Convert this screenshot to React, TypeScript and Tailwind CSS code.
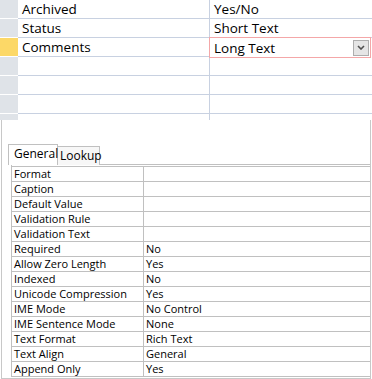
import React from "react";

const fields = [
  { name: "Archived", type: "Yes/No" },
  { name: "Status", type: "Short Text" },
  { name: "Comments", type: "Long Text", current: true },
  { name: "", type: "" },
  { name: "", type: "" },
  { name: "", type: "" },
];

const props: [string, string][] = [
  ["Format", ""],
  ["Caption", ""],
  ["Default Value", ""],
  ["Validation Rule", ""],
  ["Validation Text", ""],
  ["Required", "No"],
  ["Allow Zero Length", "Yes"],
  ["Indexed", "No"],
  ["Unicode Compression", "Yes"],
  ["IME Mode", "No Control"],
  ["IME Sentence Mode", "None"],
  ["Text Format", "Rich Text"],
  ["Text Align", "General"],
  ["Append Only", "Yes"],
];

export default function App() {
  return (
    <div
      className="w-[372px] h-[379px] bg-white overflow-hidden text-[#000]"
      style={{ fontFamily: '"Segoe UI", "Open Sans", "Noto Sans", sans-serif' }}
    >
      {/* Top grid */}
      <div className="h-[120px] flex flex-col">
        {fields.map((f, i) => (
          <div key={i} className="flex h-[19px] shrink-0">
            <div
              className={`w-[18px] shrink-0 border-b border-white ${
                f.current ? "bg-[#fcd867]" : "bg-[#dfe3e8]"
              }`}
            />
            <div className="w-[192px] shrink-0 border-b border-r border-[#c8d1e1] pl-[4px] text-[13.5px] leading-[18px]">
              {f.name}
            </div>
            {f.current ? (
              <div className="relative flex-1 -mt-[1px] -ml-[1px] h-[21px] border border-[#f4a7a8] pl-[4px] text-[13.5px] leading-[18px] flex items-center mr-[1px]">
                <span className="flex-1">{f.type}</span>
                <div className="w-[16px] h-[16px] mr-[1px] border border-[#adadad] bg-[#e5e5e5] flex items-center justify-center">
                  <svg width="8" height="5" viewBox="0 0 8 5">
                    <path d="M1 1 L4 4 L7 1" stroke="#505050" strokeWidth="1.6" fill="none" />
                  </svg>
                </div>
              </div>
            ) : (
              <div className="flex-1 border-b border-[#c8d1e1] pl-[4px] text-[13.5px] leading-[18px]">
                {f.type}
              </div>
            )}
          </div>
        ))}
        <div className="flex flex-1">
          <div className="w-[18px] shrink-0 bg-[#dfe3e8]" />
          <div className="w-[192px] shrink-0 border-r border-[#c8d1e1]" />
        </div>
      </div>

      {/* Lower property panel */}
      <div className="h-[259px] ml-[1px] w-[370px] border-l border-r border-b border-[#c8c8c8] pt-[24px] pl-[6px]">
        <div className="flex items-end h-[21px]">
          <div className="h-[21px] w-[50px] border border-b-0 border-[#c0c0c0] bg-white text-[12px] leading-[18px] pl-[5px] relative z-10">
            General
          </div>
          <div className="h-[19px] w-[42px] border border-l-0 border-b-0 border-[#c0c0c0] bg-[#f7f7f7] text-[12px] leading-[18px] pl-[2px]">
            Lookup
          </div>
        </div>
        <div className="ml-[3px] border-t-[3px] border-double border-[#c0c0c0] border-l border-[#c0c0c0] -mt-[1px] w-[359px]">
          {props.map(([k, v], i) => (
            <div key={i} className="flex h-[15px] border-b border-[#c0c0c0]">
              <div className="w-[132px] shrink-0 border-r border-[#c0c0c0] pl-[2px] text-[11px] leading-[14px] font-medium text-black">
                {k}
              </div>
              <div className="flex-1 pl-[2px] text-[11px] leading-[14px] font-medium text-black">
                {v}
              </div>
            </div>
          ))}
        </div>
      </div>
    </div>
  );
}
